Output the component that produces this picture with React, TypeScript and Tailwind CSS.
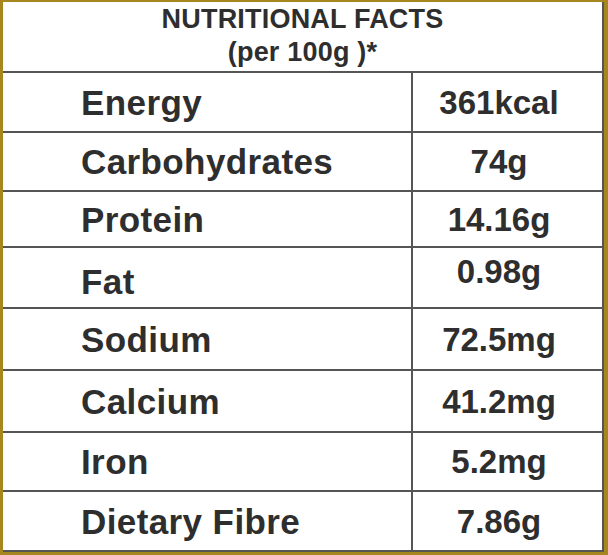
import React from 'react';

interface Nutrient {
  label: string;
  value: string;
  h: string;
  labelCls?: string;
  valueCls?: string;
}

const rows: Nutrient[] = [
  { label: 'Energy', value: '361kcal', h: 'h-[60px]' },
  { label: 'Carbohydrates', value: '74g', h: 'h-[59px]' },
  { label: 'Protein', value: '14.16g', h: 'h-[56px]' },
  { label: 'Fat', value: '0.98g', h: 'h-[61px]', labelCls: 'pt-[8px]', valueCls: 'pb-[12px]' },
  { label: 'Sodium', value: '72.5mg', h: 'h-[62px]' },
  { label: 'Calcium', value: '41.2mg', h: 'h-[62px]' },
  { label: 'Iron', value: '5.2mg', h: 'h-[59px]' },
  { label: 'Dietary Fibre', value: '7.86g', h: 'h-[60px]' },
];

export default function App() {
  return (
    <div className="w-[608px] h-[555px] bg-white flex flex-col border-solid border-[#a5861f] border-t-2 border-l-[3px] border-r-[4px] border-b-[3px] font-['Liberation_Sans',Arial,sans-serif] font-bold text-[#2e2e2e]">
      <div className="flex-1 flex flex-col border-r-2 border-b-2 border-[#555]">
        {/* Header */}
        <div className="h-[69px] pt-px flex flex-col items-center text-[27px] leading-[33px] tracking-[0.2px]">
          <div>NUTRITIONAL FACTS</div>
          <div>(per 100g )*</div>
        </div>

        {rows.map((r) => (
          <div key={r.label} className={`${r.h} grid grid-cols-[408px_1fr] border-t-2 border-[#555]`}>
            <div className={`flex items-center pl-[78px] text-[35px] leading-none tracking-[0.4px] ${r.labelCls ?? ''}`}>
              {r.label}
            </div>
            <div className={`flex items-center justify-center pr-[17px] border-l-2 border-[#555] text-[33px] leading-none ${r.valueCls ?? ''}`}>
              {r.value}
            </div>
          </div>
        ))}
      </div>
    </div>
  );
}
